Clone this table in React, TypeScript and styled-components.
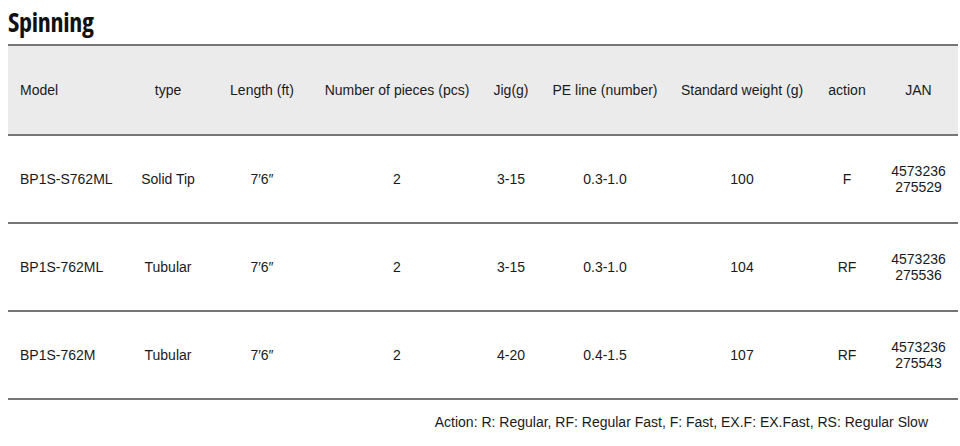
import React from 'react';
import styled, { createGlobalStyle } from 'styled-components';

const GlobalStyle = createGlobalStyle`
  html, body {
    margin: 0;
    padding: 0;
    background: #ffffff;
  }
  body {
    font-family: 'Liberation Sans', Arial, sans-serif;
    color: #1a1a1a;
  }
`;

// 列定义：宽度与对齐方式
const columns = [
  { key: 'model', label: 'Model', width: 117, align: 'left' },
  { key: 'type', label: 'type', width: 86, align: 'center' },
  { key: 'length', label: 'Length (ft)', width: 102, align: 'center' },
  { key: 'pieces', label: 'Number of pieces (pcs)', width: 168, align: 'center' },
  { key: 'jig', label: 'Jig(g)', width: 60, align: 'center' },
  { key: 'pe', label: 'PE line (number)', width: 128, align: 'center' },
  { key: 'weight', label: 'Standard weight (g)', width: 146, align: 'center' },
  { key: 'action', label: 'action', width: 64, align: 'center' },
  { key: 'jan', label: 'JAN', width: 79, align: 'center' },
] as const;

type Row = Record<(typeof columns)[number]['key'], string>;

const rows: Row[] = [
  {
    model: 'BP1S-S762ML',
    type: 'Solid Tip',
    length: '7′6″',
    pieces: '2',
    jig: '3-15',
    pe: '0.3-1.0',
    weight: '100',
    action: 'F',
    jan: '4573236\n275529',
  },
  {
    model: 'BP1S-762ML',
    type: 'Tubular',
    length: '7′6″',
    pieces: '2',
    jig: '3-15',
    pe: '0.3-1.0',
    weight: '104',
    action: 'RF',
    jan: '4573236\n275536',
  },
  {
    model: 'BP1S-762M',
    type: 'Tubular',
    length: '7′6″',
    pieces: '2',
    jig: '4-20',
    pe: '0.4-1.5',
    weight: '107',
    action: 'RF',
    jan: '4573236\n275543',
  },
];

const Page = styled.div`
  padding: 6px 2px 0 8px;
`;

const Title = styled.h2`
  margin: 0 0 6px;
  font-family: 'Open Sans', 'Noto Sans', sans-serif;
  font-weight: 700;
  font-stretch: 75%;
  font-size: 26px;
  line-height: 32px;
  letter-spacing: -0.3px;
  color: #111;
`;

const Table = styled.table`
  width: 950px;
  border-collapse: collapse;
  table-layout: fixed;
  font-size: 14px;
  border-top: 2px solid #767676;
`;

const HeadRow = styled.tr`
  background: #ebebeb;
  height: 90px;
  border-bottom: 2px solid #767676;
`;

const BodyRow = styled.tr`
  height: 88px;
  border-bottom: 2px solid #767676;
`;

const Th = styled.th<{ $align: string }>`
  font-weight: 400;
  text-align: ${p => p.$align};
  padding: ${p => (p.$align === 'left' ? '0 0 0 12px' : '0')};
  white-space: nowrap;
  color: #1a1a1a;
`;

const Td = styled.td<{ $align: string }>`
  text-align: ${p => p.$align};
  padding: ${p => (p.$align === 'left' ? '0 0 0 12px' : '0')};
  white-space: pre-line;
  line-height: 16px;
  color: #1a1a1a;
`;

const Note = styled.p`
  margin: 14px 0 0;
  width: 920px;
  text-align: right;
  font-size: 14px;
  color: #1a1a1a;
`;

const App: React.FC = () => (
  <Page>
    <GlobalStyle />
    <Title>Spinning</Title>
    <Table>
      <colgroup>
        {columns.map(c => (
          <col key={c.key} style={{ width: c.width }} />
        ))}
      </colgroup>
      <thead>
        <HeadRow>
          {columns.map(c => (
            <Th key={c.key} $align={c.align}>
              {c.label}
            </Th>
          ))}
        </HeadRow>
      </thead>
      <tbody>
        {rows.map(r => (
          <BodyRow key={r.model}>
            {columns.map(c => (
              <Td key={c.key} $align={c.align}>
                {r[c.key]}
              </Td>
            ))}
          </BodyRow>
        ))}
      </tbody>
    </Table>
    <Note>Action: R: Regular, RF: Regular Fast, F: Fast, EX.F: EX.Fast, RS: Regular Slow</Note>
  </Page>
);

export default App;
